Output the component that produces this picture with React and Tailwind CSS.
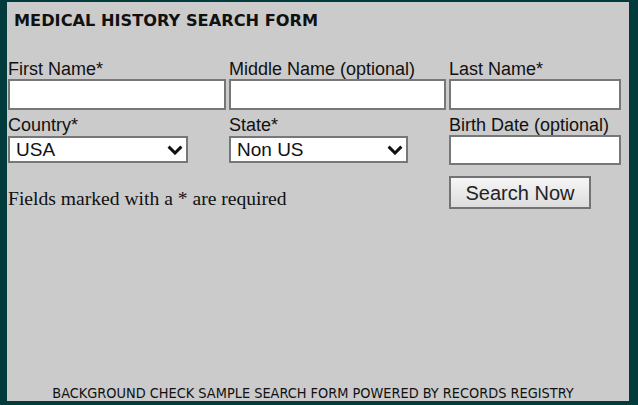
import { useState } from "react";

const Chevron = () => (
  <svg width="16" height="10" viewBox="0 0 16 10" className="pointer-events-none absolute right-[5px] top-1/2 -translate-y-1/2">
    <path d="M1.6 1.6 L8 8 L14.4 1.6" fill="none" stroke="#111" strokeWidth="3" />
  </svg>
);

const Label = ({ children, className = "" }) => (
  <label className={"block h-[20px] text-[18px] leading-[20px] text-[#111] " + className}>
    {children}
  </label>
);

const TextBox = ({ className = "" }) => (
  <input
    type="text"
    className={"block bg-white border-2 border-[#777] outline-none px-1 text-[17px] " + className}
  />
);

const Select = ({ value, onChange, options, className = "" }) => (
  <div className={"relative " + className}>
    <select
      value={value}
      onChange={(e) => onChange(e.target.value)}
      className="block w-full h-full appearance-none bg-white border-2 border-[#777] pl-[6px] text-[19px] leading-[22px] text-[#111] outline-none"
    >
      {options.map((o) => (
        <option key={o}>{o}</option>
      ))}
    </select>
    <Chevron />
  </div>
);

export default function App() {
  const [country, setCountry] = useState("USA");
  const [state, setState] = useState("Non US");

  return (
    <div className="h-[405px] w-[638px] bg-[#023b3b] pl-[7px] pt-[2px] pr-[9px] pb-[4px] font-['Liberation_Sans',Arial,sans-serif]">
      <div className="flex h-full flex-col bg-[#cbcbcb]">
        <h1 className="mt-[9px] pl-[7px] font-['DejaVu_Sans',Verdana,sans-serif] text-[16.2px] font-bold leading-[20px] text-[#111]">
          MEDICAL HISTORY SEARCH FORM
        </h1>

        <form className="mt-[28px] grid grid-cols-[221px_220px_1fr] pl-[1px]" onSubmit={(e) => e.preventDefault()}>
          <Label>First Name*</Label>
          <Label>Middle Name (optional)</Label>
          <Label>Last Name*</Label>

          <TextBox className="w-[218px] h-[31px]" />
          <TextBox className="w-[217px] h-[31px]" />
          <TextBox className="w-[172px] h-[31px]" />

          <Label className="mt-[5px]">Country*</Label>
          <Label className="mt-[5px]">State*</Label>
          <Label className="mt-[5px]">Birth Date (optional)</Label>

          <Select
            value={country}
            onChange={setCountry}
            options={["USA", "Canada", "Other"]}
            className="mt-[1px] w-[180px] h-[27px]"
          />
          <Select
            value={state}
            onChange={setState}
            options={["Non US", "Alabama", "Alaska", "Arizona"]}
            className="mt-[1px] w-[179px] h-[27px]"
          />
          <TextBox className="w-[172px] h-[30px]" />

          <p className="col-span-2 mt-[23px] font-['Liberation_Serif','Times_New_Roman',serif] text-[19.6px] leading-[22px] text-[#111]">
            Fields marked with a * are required
          </p>
          <div>
            <button
              type="submit"
              className="mt-[11px] h-[33px] w-[142px] border-2 border-[#737373] bg-gradient-to-b from-[#f6f6f6] to-[#dddddd] text-[20px] leading-[24px] text-[#222]"
            >
              Search Now
            </button>
          </div>
        </form>

        <div className="mt-auto mb-[1px] pr-[10px] text-center font-['DejaVu_Sans_Condensed','DejaVu_Sans',sans-serif] text-[14.4px] leading-[14px] text-[#111] [font-stretch:condensed] overflow-hidden whitespace-nowrap">
          BACKGROUND CHECK SAMPLE SEARCH FORM POWERED BY RECORDS REGISTRY
        </div>
      </div>
    </div>
  );
}
